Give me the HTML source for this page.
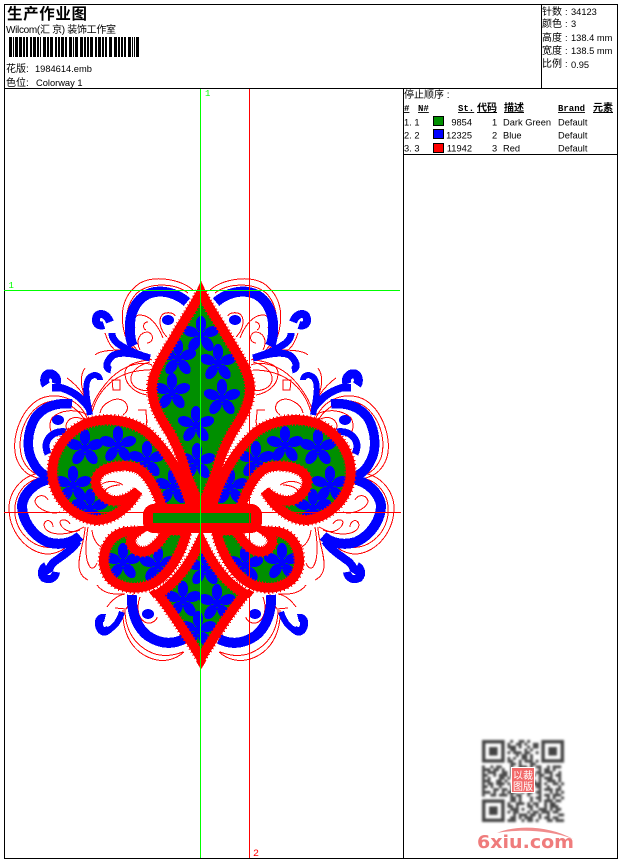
<!DOCTYPE html>
<html><head><meta charset="utf-8"><style>
html,body{margin:0;padding:0;background:#fff}
svg{display:block}
text{font-family:"Liberation Sans","WenQuanYi Zen Hei","Noto Sans CJK SC",sans-serif;font-size:9.3px;fill:#000}
.c{font-size:10px}
.b{font-weight:bold;text-decoration:underline;font-family:"Liberation Mono","WenQuanYi Zen Hei",monospace;font-size:9px}
.bc{font-weight:bold;text-decoration:underline;font-size:10px}
.thin path{fill:none;stroke:#f00;stroke-width:1}
.blue path{fill:none;stroke:#00f}
.f{fill:#008f00;stroke:none}
.sr{fill:none;stroke:#f00;stroke-width:12;stroke-dasharray:1 2.5}
.s{fill:none;stroke:#f00;stroke-width:9.5;stroke-linejoin:miter;stroke-miterlimit:5}
</style></head><body>
<svg width="620" height="860" viewBox="0 0 620 860" xmlns="http://www.w3.org/2000/svg">
<defs>
<path id="pc" d="M201,292C195,305 183,322 173,340C162,358 151,375 152,390C153,408 162,420 170,433C177,446 182,457 185,470C190,485 196,495 201,510C206,495 212,485 217,470C220,457 225,446 232,433C240,420 249,408 250,390C251,375 240,358 229,340C219,322 207,305 201,292Z"/>
<path id="ps" d="M192,510C186,485 172,455 148,433C132,420 105,416 85,424C62,435 49,458 53,480C57,501 75,517 95,520C110,521 127,510 138,491C128,500 115,504 106,498C96,491 93,481 99,474C106,466 125,464 137,468C148,474 156,488 163,510Z"/>
<path id="pl" d="M187,530C183,550 170,576 150,585C130,592 108,586 104,565C102,548 112,534 125,532L138,531C130,536 128,544 136,550C146,555 156,548 164,535L168,530Z"/>
<path id="pb" d="M201,540C192,560 178,582 158,594C172,612 190,640 201,658C212,640 230,612 245,594C224,582 210,560 201,540Z"/>
<clipPath id="cp">
<use href="#pc"/><use href="#ps"/><use href="#pl"/><use href="#pb"/>
<use href="#ps" transform="translate(403,0) scale(-1,1)"/>
<use href="#pl" transform="translate(403,0) scale(-1,1)"/>
</clipPath>
<g id="fl" fill="#00f">
<ellipse cx="0" cy="-11" rx="5.2" ry="8"/>
<ellipse cx="0" cy="-11" rx="5.2" ry="8" transform="rotate(72)"/>
<ellipse cx="0" cy="-11" rx="5.2" ry="8" transform="rotate(144)"/>
<ellipse cx="0" cy="-11" rx="5.2" ry="8" transform="rotate(216)"/>
<ellipse cx="0" cy="-11" rx="5.2" ry="8" transform="rotate(288)"/>
<circle r="4"/>
</g>
<g id="half">
<g class="thin">
<path d="M193,290C180,279 155,275 140,283C125,293 118,310 125,335C128,345 135,352 150,358"/>
<path d="M188,293C175,283 150,282 137,293C125,305 124,325 130,340C135,350 142,355 150,358"/>
<path d="M167,337C160,330 158,320 162,315C166,311 175,313 175,316"/>
<path d="M163,338C158,325 150,315 140,315C134,315 132,322 135,328"/>
<path d="M148,322C143,322 142,328 146,330"/>
<path d="M140,350C135,340 140,332 148,332C155,335 153,343 147,343"/>
<path d="M95,355C100,350 115,350 125,350C135,352 145,357 152,360"/>
<path d="M105,333C108,342 112,352 125,355C135,357 145,358 150,360"/>
<path d="M90,412C95,395 110,375 125,368C135,363 145,362 152,365"/>
<path d="M92,412C100,385 120,370 150,370"/>
<path d="M112,380h8v10h-7z"/>
<path d="M150,362C138,365 130,372 131,380C132,388 142,392 150,390"/>
<path d="M147,395C135,393 125,385 125,373C125,365 135,362 148,360"/>
<path d="M100,413C102,403 115,397 122,400C128,403 130,410 123,415"/>
<path d="M138,410H146C146,418 148,422 146,425"/>
<path d="M67,378C77,385 85,395 88,405"/>
<path d="M85,368C78,378 82,392 89,405"/>
<path d="M88,420C80,400 62,393 45,397C22,403 9,440 17,460C22,472 30,478 48,480"/>
<path d="M85,420C75,405 60,398 48,402C28,407 15,435 22,458C27,470 35,475 45,477"/>
<path d="M88,415C75,408 60,410 52,418C47,427 52,437 58,436"/>
<path d="M85,420C75,415 68,418 66,425C66,432 72,432 73,427"/>
<path d="M45,473C25,472 8,490 9,510C10,535 30,555 50,554C55,553 60,552 65,548"/>
<path d="M42,478C25,480 13,495 15,515C18,535 35,550 55,547"/>
<path d="M60,512C52,515 38,510 35,502C35,495 45,493 48,500"/>
<path d="M84,527C65,538 45,535 44,525C45,518 53,520 53,527"/>
<path d="M80,530C70,535 60,528 60,522C62,518 68,520 70,524"/>
<path d="M85,527C85,540 78,555 79,567C80,575 84,578 88,580"/>
<path d="M88,527C85,545 85,560 90,567C93,570 96,566 97,563"/>
<path d="M92,530C93,540 97,545 103,548"/>
<path d="M97,585C102,592 110,595 125,594"/>
<path d="M107,607C112,600 118,595 125,594"/>
<path d="M115,608L126,609C130,603 132,598 133,594"/>
<path d="M123,610C122,630 130,650 150,658C163,663 175,660 184,652"/>
<path d="M125,610C125,630 135,647 155,654C165,657 175,655 183,652"/>
<path d="M140,597C136,608 138,620 147,623C152,624 157,620 157,617"/>
<path d="M102,484C109,480 117,481 123,485M104,491C109,486 115,485 120,485"/>
</g>
<g class="blue">
<path stroke-width="10" d="M187,302C175,292 160,289 148,294C135,300 129,315 130,330C130,337 131,342 133,346"/>
<path stroke-width="9.5" d="M72,404C55,402 42,408 35,418C27,432 26,450 33,462C37,470 42,474 47,476"/>
<path stroke-width="10" d="M50,479C35,482 24,493 22,505C22,520 32,535 47,542C60,546 72,543 80,536"/>
<path stroke-width="10" d="M132,595C131,612 137,628 148,636C160,644 172,645 184,639"/>
<path stroke-width="7" d="M150,358C135,354 124,348 117,343C112,338 112,335 112,333"/>
<path stroke-width="8" d="M110,322C107,314 100,312 97,316C94,322 98,327 104,325"/>
<path stroke-width="7" d="M150,358C135,354 118,350 111,357C105,364 106,369 111,370"/>
<path stroke-width="7.5" d="M89,408C82,398 74,392 62,388C56,387 54,388 52,388"/>
<path stroke-width="9" d="M56,384C58,378 54,373 48,374C44,376 44,382 46,385"/>
<path stroke-width="6" d="M90,415C86,395 84,382 90,377C95,373 100,376 100,380"/>
<path stroke-width="7" d="M66,432C55,430 47,437 46,445C46,449 47,452 48,454"/>
<path stroke-width="8" d="M78,541C72,550 62,556 54,562C50,566 48,570 50,573"/>
<path stroke-width="8" d="M56,572C55,578 50,581 44,578C40,574 42,568 46,566"/>
<path stroke-width="6" d="M122,612C118,624 112,630 106,630C102,630 100,628 100,626"/>
<path stroke-width="8" d="M109,629C104,634 100,631 99,625C98,620 101,617 105,618"/>
</g>
<ellipse cx="58" cy="420" rx="6" ry="5" fill="#00f"/><ellipse cx="168" cy="320" rx="6" ry="5" fill="#00f"/><ellipse cx="148" cy="614" rx="6" ry="5" fill="#00f"/>
</g>
<g id="hf">
<use href="#ps" class="f"/><use href="#pl" class="f"/>
</g>
<g id="hs">
<use href="#ps" class="sr"/><use href="#pl" class="sr"/>
<use href="#ps" class="s"/><use href="#pl" class="s"/>
</g>
</defs>

<rect x="4.5" y="4.5" width="613" height="854" fill="#fff" stroke="#000"/>
<path d="M4,88.5H618M541.5,4V88M403.5,88V859M403,154.5H618" stroke="#000" fill="none"/>

<text x="7" y="19" textLength="80" style="font-size:15.5px;font-weight:bold">生产作业图</text>
<text x="6" y="33" textLength="110" class="c">Wilcom(汇 京) 装饰工作室</text>
<line x1="9" x2="140" y1="47" y2="47" stroke="#000" stroke-width="20" stroke-dasharray="3 1 1 1 3 1 3 1 2 1 2 2 2 1 3 1 2 1 1 2 3 1 2 1 3 2 2 1 2 1 3 1 2 2 3 1 1 1 3 2 3 1 2 1 2 1 3 2 2 1 3 1 2 1 2 2 3 2 3 1 2 1 2 1 2 2 3 1 1 1 1 1 3 3 1 1 1 1 1 1 1 1 1 1"/>
<text x="6" y="72" class="c">花版:</text><text x="35" y="72">1984614.emb</text>
<text x="6" y="86" class="c">色位:</text><text x="36" y="86">Colorway 1</text>

<text x="542" y="15" class="c">针数</text><text x="565" y="15">:</text><text x="571" y="15">34123</text>
<text x="542" y="27" class="c">颜色</text><text x="565" y="27">:</text><text x="571" y="27">3</text>
<text x="542" y="41" class="c">高度</text><text x="565" y="41">:</text><text x="571" y="41">138.4 mm</text>
<text x="542" y="54" class="c">宽度</text><text x="565" y="54">:</text><text x="571" y="54">138.5 mm</text>
<text x="542" y="67" class="c">比例</text><text x="565" y="67">:</text><text x="571" y="68">0.95</text>

<text x="404" y="98" class="c">停止顺序 :</text>
<text x="404" y="111" class="b">#</text>
<text x="418" y="111" class="b">N#</text>
<text x="458" y="111" class="b">St.</text>
<text x="477" y="111" class="bc">代码</text>
<text x="504" y="111" class="bc">描述</text>
<text x="558" y="111" class="b">Brand</text>
<text x="593" y="111" class="bc">元素</text>
<text x="404" y="125.5">1.  1</text><text x="472" y="125.5" text-anchor="end">9854</text><text x="492" y="125.5">1</text><text x="503" y="125.5">Dark Green</text><text x="558" y="125.5">Default</text>
<text x="404" y="138.5">2.  2</text><text x="472" y="138.5" text-anchor="end">12325</text><text x="492" y="138.5">2</text><text x="503" y="138.5">Blue</text><text x="558" y="138.5">Default</text>
<text x="404" y="151.5">3.  3</text><text x="472" y="151.5" text-anchor="end">11942</text><text x="492" y="151.5">3</text><text x="503" y="151.5">Red</text><text x="558" y="151.5">Default</text>
<rect x="433.5" y="116.5" width="10" height="9" fill="#008f00" stroke="#000"/>
<rect x="433.5" y="129.5" width="10" height="9" fill="#00f" stroke="#000"/>
<rect x="433.5" y="143.5" width="10" height="9" fill="#f00" stroke="#000"/>

<g shape-rendering="crispEdges">
<use href="#half"/>
<use href="#half" transform="translate(403,0) scale(-1,1)"/>

<use href="#pb" class="f"/>
<use href="#pc" class="f"/>
<use href="#hf"/>
<use href="#hf" transform="translate(403,0) scale(-1,1)"/>
<g clip-path="url(#cp)">
<use href="#fl" x="201" y="335"/><use href="#fl" x="178" y="358"/><use href="#fl" x="218" y="363"/><use href="#fl" x="172" y="392"/><use href="#fl" x="222" y="398"/>
<use href="#fl" x="196" y="425"/><use href="#fl" x="197" y="462"/>
<use href="#fl" x="85" y="448"/><use href="#fl" x="118" y="445"/><use href="#fl" x="147" y="460"/><use href="#fl" x="73" y="485"/><use href="#fl" x="173" y="487"/><use href="#fl" x="90" y="508"/>
<use href="#fl" x="318" y="448"/><use href="#fl" x="285" y="445"/><use href="#fl" x="256" y="460"/><use href="#fl" x="330" y="485"/><use href="#fl" x="230" y="487"/><use href="#fl" x="313" y="508"/>
<use href="#fl" x="123" y="562"/><use href="#fl" x="158" y="565"/><use href="#fl" x="282" y="562"/><use href="#fl" x="245" y="565"/>
<use href="#fl" x="183" y="600"/><use href="#fl" x="217" y="603"/><use href="#fl" x="205" y="568"/><use href="#fl" x="198" y="630"/>
</g>
<use href="#pb" class="sr"/><use href="#pb" class="s"/>
<use href="#hs"/>
<use href="#hs" transform="translate(403,0) scale(-1,1)"/>
<use href="#pc" class="sr"/><use href="#pc" class="s"/>
<rect x="143" y="504" width="119" height="29" rx="11" fill="#f00"/>
<rect x="153" y="513" width="98" height="10" fill="#008f00"/>

<line x1="249.5" x2="249.5" y1="89" y2="858" stroke="#f00"/>
<line x1="4" x2="401" y1="512.5" y2="512.5" stroke="#f00"/>
<line x1="200.5" x2="200.5" y1="89" y2="858" stroke="#0f0"/>
<line x1="4" x2="400" y1="290.5" y2="290.5" stroke="#0f0"/>
</g>
<text x="205" y="96" style="fill:#0f0;font-family:'Liberation Mono',monospace;font-size:9px">1</text>
<text x="8.5" y="288" style="fill:#0f0;font-family:'Liberation Mono',monospace;font-size:9px">1</text>
<text x="253" y="856" style="fill:#f00;font-family:'Liberation Mono',monospace;font-size:10px">2</text>

<svg x="481" y="740" width="84" height="82" viewBox="0 0 29 29" style="filter:blur(.35px)">
<g stroke="#444" stroke-width="1" fill="none">
<path stroke-dasharray="9 1 1 2 2 1 1 3 1 1 1 6" d="M0,.5H29"/>
<path stroke-dasharray="9 2 2 1 1 2 3 1 2 1 1 4" d="M0,1.5H29" stroke-dashoffset="-1"/>
<path stroke-dasharray="1 8 3 1 1 2 1 1 2 2 1 8" d="M0,2.5H29"/>
<path stroke-dasharray="9 1 2 3 1 1 1 2 2 1 1 2 3" d="M0,3.5H29"/>
<path stroke-dasharray="1 8 1 1 3 1 2 2 1 2 1 8" d="M0,4.5H29"/>
<path stroke-dasharray="9 3 1 1 2 1 1 2 3 1 1 2 2" d="M0,5.5H29"/>
<path stroke-dasharray="8 1 1 1 1 2 2 1 1 2 1 1 8" d="M0,6.5H29"/>
<path stroke-dasharray="0 9 2 2 1 1 3 1 1 1 2 6" d="M0,7.5H29"/>
<path stroke-dasharray="2 1 3 2 1 1 2 1 1 3 2 1 1 2 3 1 1 1 1" d="M0,8.5H29"/>
<path stroke-dasharray="1 2 1 1 2 3 1 2 3 1 1 1 2 2 1 1 3" d="M0,9.5H29"/>
<path stroke-dasharray="3 1 2 1 1 2 1 1 2 1 3 2 1 1 2 1 1 3" d="M0,10.5H29"/>
<path stroke-dasharray="1 1 3 2 2 1 1 2 1 3 1 1 2 1 3 2 1" d="M0,11.5H29"/>
<path stroke-dasharray="2 2 1 1 3 1 2 2 1 1 3 1 2 2 1 1 2 1" d="M0,12.5H29"/>
<path stroke-dasharray="1 1 1 3 2 1 1 1 3 2 2 2 1 1 3 2 1 1" d="M0,13.5H29"/>
<path stroke-dasharray="3 2 2 1 1 2 1 1 1 3 2 1 1 2 3 1 1 1" d="M0,14.5H29"/>
<path stroke-dasharray="1 1 2 1 3 1 1 2 2 2 1 1 3 1 1 2 2 1" d="M0,15.5H29"/>
<path stroke-dasharray="2 1 1 2 1 3 1 1 2 3 1 1 2 2 1 3 1" d="M0,16.5H29"/>
<path stroke-dasharray="1 3 2 1 2 1 1 2 3 1 1 2 1 1 3 1 2 1" d="M0,17.5H29"/>
<path stroke-dasharray="3 1 1 2 1 1 3 2 1 1 2 1 2 3 1 1 1 1" d="M0,18.5H29"/>
<path stroke-dasharray="1 2 2 1 3 1 1 1 2 2 1 3 1 1 2 1 3" d="M0,19.5H29"/>
<path stroke-dasharray="2 1 3 1 1 2 2 1 1 3 1 1 2 2 1 1 1 2" d="M0,20.5H29"/>
<path stroke-dasharray="9 1 2 1 1 3 1 2 1 1 3 1 2 1" d="M0,21.5H29"/>
<path stroke-dasharray="8 1 1 2 3 1 1 1 2 2 1 1 2 3" d="M0,22.5H29" />
<path stroke-dasharray="1 8 2 1 1 3 2 1 1 2 1 1 3 2" d="M0,23.5H29"/>
<path stroke-dasharray="9 1 3 1 1 2 1 2 3 1 1 1 2 1" d="M0,24.5H29"/>
<path stroke-dasharray="1 8 1 1 2 3 1 1 2 1 3 1 2 2" d="M0,25.5H29"/>
<path stroke-dasharray="9 2 1 1 3 1 2 1 1 2 1 3 2" d="M0,26.5H29"/>
<path stroke-dasharray="8 2 2 1 1 1 3 2 1 1 2 1 2 2" d="M0,27.5H29"/>
<path stroke-dasharray="8 1 3 2 1 1 2 1 1 3 2 1 3" d="M0,28.5H29"/>
</g>
<g fill="#fff" stroke="none"><rect x="0" y="0" width="9" height="9"/><rect x="20" y="0" width="9" height="9"/><rect x="0" y="20" width="9" height="9"/></g>
<g fill="none" stroke="#444" stroke-width="1.2"><rect x=".6" y=".6" width="6.8" height="6.8"/><rect x="21.6" y=".6" width="6.8" height="6.8"/><rect x=".6" y="21.6" width="6.8" height="6.8"/></g>
<g fill="#444"><rect x="2.5" y="2.5" width="3" height="3"/><rect x="23.5" y="2.5" width="3" height="3"/><rect x="2.5" y="23.5" width="3" height="3"/></g>
</svg>
<rect x="511" y="767" width="24" height="26" fill="#fff"/>
<rect x="512" y="768" width="22" height="24" fill="#f26a6a"/>
<text x="513" y="779" style="font-size:10px;fill:#fff">以裁</text>
<text x="513" y="790" style="font-size:10px;fill:#fff">图版</text>
<path d="M497,833C515,825 548,825 573,839C550,830 520,829 497,833Z" fill="#f08c8c"/>
<text x="477" y="848" textLength="97" lengthAdjust="spacingAndGlyphs" style="font-family:'DejaVu Sans',sans-serif;font-size:18px;font-weight:bold;fill:#ef7c7c">6xiu.com</text>
</svg>
</body></html>
